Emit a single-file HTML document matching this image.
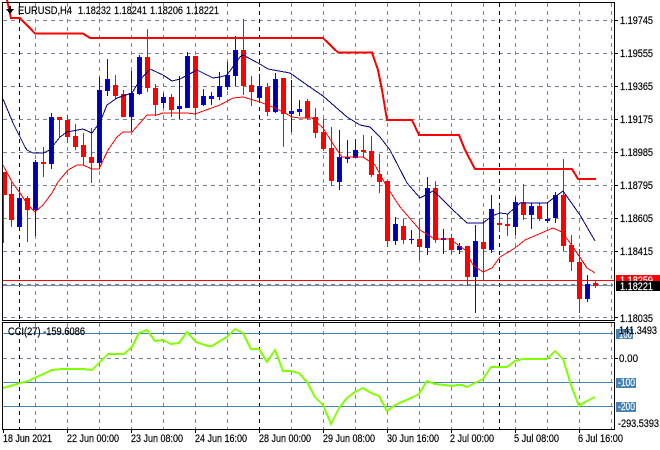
<!DOCTYPE html>
<html><head><meta charset="utf-8"><style>
html,body{margin:0;padding:0;background:#fff;width:660px;height:450px;overflow:hidden}
svg{display:block;position:absolute;left:0;top:0}
text{font-family:"Liberation Sans",sans-serif;font-size:11px;fill:#000;stroke:#000;stroke-width:.2px}
text.w{fill:#fff;stroke:#fff}
</style></head><body>
<svg width="660" height="450" viewBox="0 0 660 450" xmlns="http://www.w3.org/2000/svg">
<rect width="660" height="450" fill="#fff"/>
<g shape-rendering="crispEdges" fill="none">
<!-- grid -->
<path stroke="#778899" stroke-dasharray="4 4" d="M3 20.5H613M3 53.5H613M3 86.5H613M3 119.5H613M3 152.5H613M3 185.5H613M3 218.5H613M3 251.5H613M3 284.5H613M3 317.5H613M3 358.5H613"/>
<path stroke="#778899" stroke-dasharray="4 4" d="M35.5 3V320M67.5 3V320M99.5 3V320M131.5 3V320M163.5 3V320M195.5 3V320M227.5 3V320M291.5 3V320M323.5 3V320M355.5 3V320M387.5 3V320M419.5 3V320M451.5 3V320M483.5 3V320M515.5 3V320M547.5 3V320M579.5 3V320M611.5 3V320M35.5 323V429M67.5 323V429M99.5 323V429M131.5 323V429M163.5 323V429M195.5 323V429M227.5 323V429M291.5 323V429M323.5 323V429M355.5 323V429M387.5 323V429M419.5 323V429M451.5 323V429M483.5 323V429M515.5 323V429M547.5 323V429M579.5 323V429M611.5 323V429"/>
<path stroke="#000" stroke-dasharray="4 4" d="M19.5 3V320M259.5 3V320M499.5 3V320M19.5 323V429M259.5 323V429M499.5 323V429"/>
<!-- CCI levels -->
<path stroke="#4682b4" d="M3 333.5H613M3 382.5H613M3 406.5H613"/>
<path stroke="#778899" d="M3 285.5H613"/>
<!-- wicks -->
<path stroke="#0000ff" d="M19.5 189V227M35.5 160V236M51.5 113V169M99.5 77V169M107.5 59V96M131.5 71V131M139.5 55V95M163.5 93V108M179.5 76V119M187.5 52V108M203.5 89V106M211.5 92V105M219.5 72V100M227.5 62V90M235.5 36V86M259.5 74V99M275.5 73V113M291.5 80V132M299.5 100V116M339.5 130V190M347.5 140V163M355.5 139V158M395.5 217V245M411.5 230V244M427.5 177V255M443.5 229V254M459.5 243V254M475.5 225V313M491.5 195V253M515.5 197V235M531.5 203V229M547.5 203V223M555.5 192V223M587.5 275V302"/>
<path stroke="#ff0000" d="M3.5 172V243M11.5 182V227M27.5 196V242M43.5 147V177M59.5 117V137M67.5 115V143M75.5 124V150M83.5 133V165M91.5 128V183M115.5 75V99M123.5 90V117M147.5 29V92M155.5 84V116M171.5 94V117M195.5 56V115M243.5 19V95M251.5 76V106M267.5 83V116M283.5 78V147M307.5 99V120M315.5 108V138M323.5 119V151M331.5 127V186M363.5 135V157M371.5 136V177M379.5 154V193M387.5 181V247M403.5 219V244M419.5 219V260M435.5 181V243M451.5 234V254M467.5 246V286M483.5 220V280M499.5 205V232M507.5 214V236M523.5 184V220M539.5 203V221M563.5 159V251M571.5 235V271M579.5 249V313M595.5 281V288"/>
<!-- bodies -->
<path stroke="#0000ff" stroke-width="5" d="M19.5 198V227M35.5 162V210M51.5 117V164M99.5 90V163M107.5 79V91M131.5 93V117M139.5 57V94M163.5 97V103M179.5 106V109M187.5 56V108M203.5 96V105M211.5 96V99M219.5 86V97M227.5 75V87M235.5 50V76M259.5 86V98M275.5 79V112M291.5 111V114M299.5 109V112M339.5 157V182M347.5 157V159M355.5 150V158M395.5 224V241M411.5 239V240M427.5 188V248M443.5 238V240M459.5 246V250M475.5 241V277M491.5 209V250M515.5 202V227M531.5 206V215M547.5 219V221M555.5 195V218M587.5 284V299"/>
<path stroke="#0000a8" stroke-width="3" d="M19.5 199V226M35.5 163V209M51.5 118V163M99.5 91V162M107.5 80V90M131.5 94V116M139.5 58V93M163.5 98V102M187.5 57V107M203.5 97V104M219.5 87V96M227.5 76V86M235.5 51V75M259.5 87V97M275.5 80V111M339.5 158V181M355.5 151V157M395.5 225V240M427.5 189V247M459.5 247V249M475.5 242V276M491.5 210V249M515.5 203V226M531.5 207V214M555.5 196V217M587.5 285V298"/>
<path stroke="#ff0000" stroke-width="5" d="M4.5 172V195M11.5 194V220M27.5 198V210M43.5 162V164M59.5 117V120M67.5 120V137M75.5 136V147M83.5 145V157M91.5 157V163M115.5 85V96M123.5 94V117M147.5 57V88M155.5 88V105M171.5 97V110M195.5 56V108M243.5 50V86M251.5 85V92M267.5 87V112M283.5 78V114M307.5 101V118M315.5 117V133M323.5 132V149M331.5 148V181M363.5 150V152M371.5 151V175M379.5 174V182M387.5 181V241M403.5 226V240M419.5 239V247M435.5 188V240M451.5 238V250M467.5 246V277M483.5 242V249M499.5 223V225M507.5 224V226M523.5 202V215M539.5 206V219M563.5 195V246M571.5 245V262M579.5 262V299M595.5 283V286"/>
</g>
<!-- moving averages -->
<g fill="none" shape-rendering="crispEdges">
<polyline stroke="#000080" points="3,99 13,123 20,137 25,147 27,150 33,153 43,153 50,150 52,147 60,137 67,132 83,129 92,133 100,122 107,105 117,98 132,93 140,80 150,69 163,75 172,81 180,79 197,70 213,78 220,77 227,75 240,57 243,55 258,63 268,69 290,73 307,85 323,96 347,117 360,125 370,127 380,137 390,150 407,183 420,198 433,191 440,197 453,210 467,223 483,223 492,216 500,213 508,214 520,203 547,203 563,191 580,215 595,241"/>
<polyline stroke="#ff0000" points="3,165 12,182 20,193 28,205 35,212 43,205 52,193 58,182 68,170 77,165 83,165 92,169 99,169 108,150 117,137 123,132 132,132 147,115 157,115 163,113 187,113 195,114 220,105 233,98 243,97 260,102 275,108 285,113 292,117 300,118 312,118 323,128 337,150 342,157 363,157 375,165 387,187 400,207 420,230 433,238 440,239 450,239 465,250 473,265 483,272 492,268 500,257 515,248 525,240 553,228 562,232 573,247 587,268 595,273"/>
<!-- stepped red -->
<polyline stroke="#ff0000" stroke-width="2" points="7,0 11,18 20,18 35,33.5 83,33.5 90,38 323,38 338,52.5 372,52.5 378,70 382,90 387,120 412,120 419,135 459,135 465,150 475,169 572,169 578,179 596,179"/>
<!-- CCI -->
<polyline stroke="#7fff00" stroke-width="2" points="3,388 17,384 28,381 52,370 62,369 83,369 92,370 108,354 124,354 132,347 139,333 147,330 155,341 163,340 171,344 179,343 187,332 196,342 208,346 212,346 220,341 227,337 235,329 243,333 251,349 259,349 267,362 275,350 283,371 291,371 299,373 307,382 315,397 323,405 331,424 339,408 347,398 355,392 363,388 371,393 379,396 387,411 395,405 411,398 419,394 427,381 435,384 453,386 457,385 462,385 467,387 475,383 483,379 491,367 507,367 515,361 523,359 547,359 555,351 563,359 571,385 579,406 587,401 595,397"/>
</g>
<g shape-rendering="crispEdges">
<!-- current price lines -->
<rect x="3" y="280" width="611" height="1" fill="#ff0000"/>
<!-- frames -->
<path fill="none" stroke="#000" d="M2.5 2V321M2.5 322V429M2 2.5H614M614.5 2V321M2 320.5H615M2 322.5H615M614.5 322V430M2 429.5H615"/>
<!-- ticks -->
<path fill="none" stroke="#000" d="M615 20.5H618M615 53.5H618M615 86.5H618M615 119.5H618M615 152.5H618M615 185.5H618M615 218.5H618M615 251.5H618M615 317.5H618M615 358.5H618M3.5 430V433M67.5 430V433M131.5 430V433M195.5 430V433M259.5 430V433M323.5 430V433M387.5 430V433M451.5 430V433M515.5 430V433M579.5 430V433"/>
<!-- labels bg -->
<rect x="616" y="275" width="44" height="7" fill="#ff0000"/>
</g>
<text class="w" x="620" y="284" textLength="33" lengthAdjust="spacingAndGlyphs">1.18259</text>
<g shape-rendering="crispEdges">
<rect x="616" y="281" width="44" height="10" fill="#000"/>
<rect x="616" y="329" width="17" height="10" fill="#4682b4"/>
<rect x="616" y="378" width="20" height="10" fill="#4682b4"/>
<rect x="616" y="402" width="20" height="10" fill="#4682b4"/>
<!-- arrow -->
<path d="M6 9H14L10 14Z" fill="#000"/>
<rect x="9" y="6" width="2" height="3" fill="#000"/>
</g>
<!-- header -->
<text x="18" y="14" textLength="54" lengthAdjust="spacingAndGlyphs">EURUSD,H4</text>
<text x="78" y="14" textLength="33" lengthAdjust="spacingAndGlyphs">1.18232</text>
<text x="114" y="14" textLength="33" lengthAdjust="spacingAndGlyphs">1.18241</text>
<text x="150" y="14" textLength="33" lengthAdjust="spacingAndGlyphs">1.18206</text>
<text x="186" y="14" textLength="33" lengthAdjust="spacingAndGlyphs">1.18221</text>
<text x="8" y="335" textLength="77" lengthAdjust="spacingAndGlyphs">CCI(27) -159.6086</text>
<!-- price axis -->
<text x="620" y="24" textLength="33" lengthAdjust="spacingAndGlyphs">1.19745</text>
<text x="620" y="57" textLength="33" lengthAdjust="spacingAndGlyphs">1.19555</text>
<text x="620" y="90" textLength="33" lengthAdjust="spacingAndGlyphs">1.19365</text>
<text x="620" y="123" textLength="33" lengthAdjust="spacingAndGlyphs">1.19175</text>
<text x="620" y="156" textLength="33" lengthAdjust="spacingAndGlyphs">1.18985</text>
<text x="620" y="189" textLength="33" lengthAdjust="spacingAndGlyphs">1.18795</text>
<text x="620" y="222" textLength="33" lengthAdjust="spacingAndGlyphs">1.18605</text>
<text x="620" y="255" textLength="33" lengthAdjust="spacingAndGlyphs">1.18415</text>
<text class="w" x="620" y="290" textLength="33" lengthAdjust="spacingAndGlyphs">1.18221</text>
<text x="620" y="322" textLength="33" lengthAdjust="spacingAndGlyphs">1.18035</text>
<text class="w" x="619" y="338" textLength="13" lengthAdjust="spacingAndGlyphs">100</text>
<text x="619" y="334" textLength="38" lengthAdjust="spacingAndGlyphs">141.3493</text>
<text x="619" y="362" textLength="19" lengthAdjust="spacingAndGlyphs">0.00</text>
<text class="w" x="618" y="386" textLength="17" lengthAdjust="spacingAndGlyphs">-100</text>
<text class="w" x="618" y="410" textLength="17" lengthAdjust="spacingAndGlyphs">-200</text>
<text x="618" y="427" textLength="41" lengthAdjust="spacingAndGlyphs">-293.5393</text>
<!-- time axis -->
<text x="3" y="442" textLength="49" lengthAdjust="spacingAndGlyphs">18 Jun 2021</text>
<text x="67" y="442" textLength="52" lengthAdjust="spacingAndGlyphs">22 Jun 00:00</text>
<text x="131" y="442" textLength="52" lengthAdjust="spacingAndGlyphs">23 Jun 08:00</text>
<text x="195" y="442" textLength="52" lengthAdjust="spacingAndGlyphs">24 Jun 16:00</text>
<text x="259" y="442" textLength="52" lengthAdjust="spacingAndGlyphs">28 Jun 00:00</text>
<text x="323" y="442" textLength="52" lengthAdjust="spacingAndGlyphs">29 Jun 08:00</text>
<text x="387" y="442" textLength="52" lengthAdjust="spacingAndGlyphs">30 Jun 16:00</text>
<text x="450" y="442" textLength="44" lengthAdjust="spacingAndGlyphs">2 Jul 00:00</text>
<text x="514" y="442" textLength="45" lengthAdjust="spacingAndGlyphs">5 Jul 08:00</text>
<text x="578" y="442" textLength="45" lengthAdjust="spacingAndGlyphs">6 Jul 16:00</text>
</svg>
</body></html>
